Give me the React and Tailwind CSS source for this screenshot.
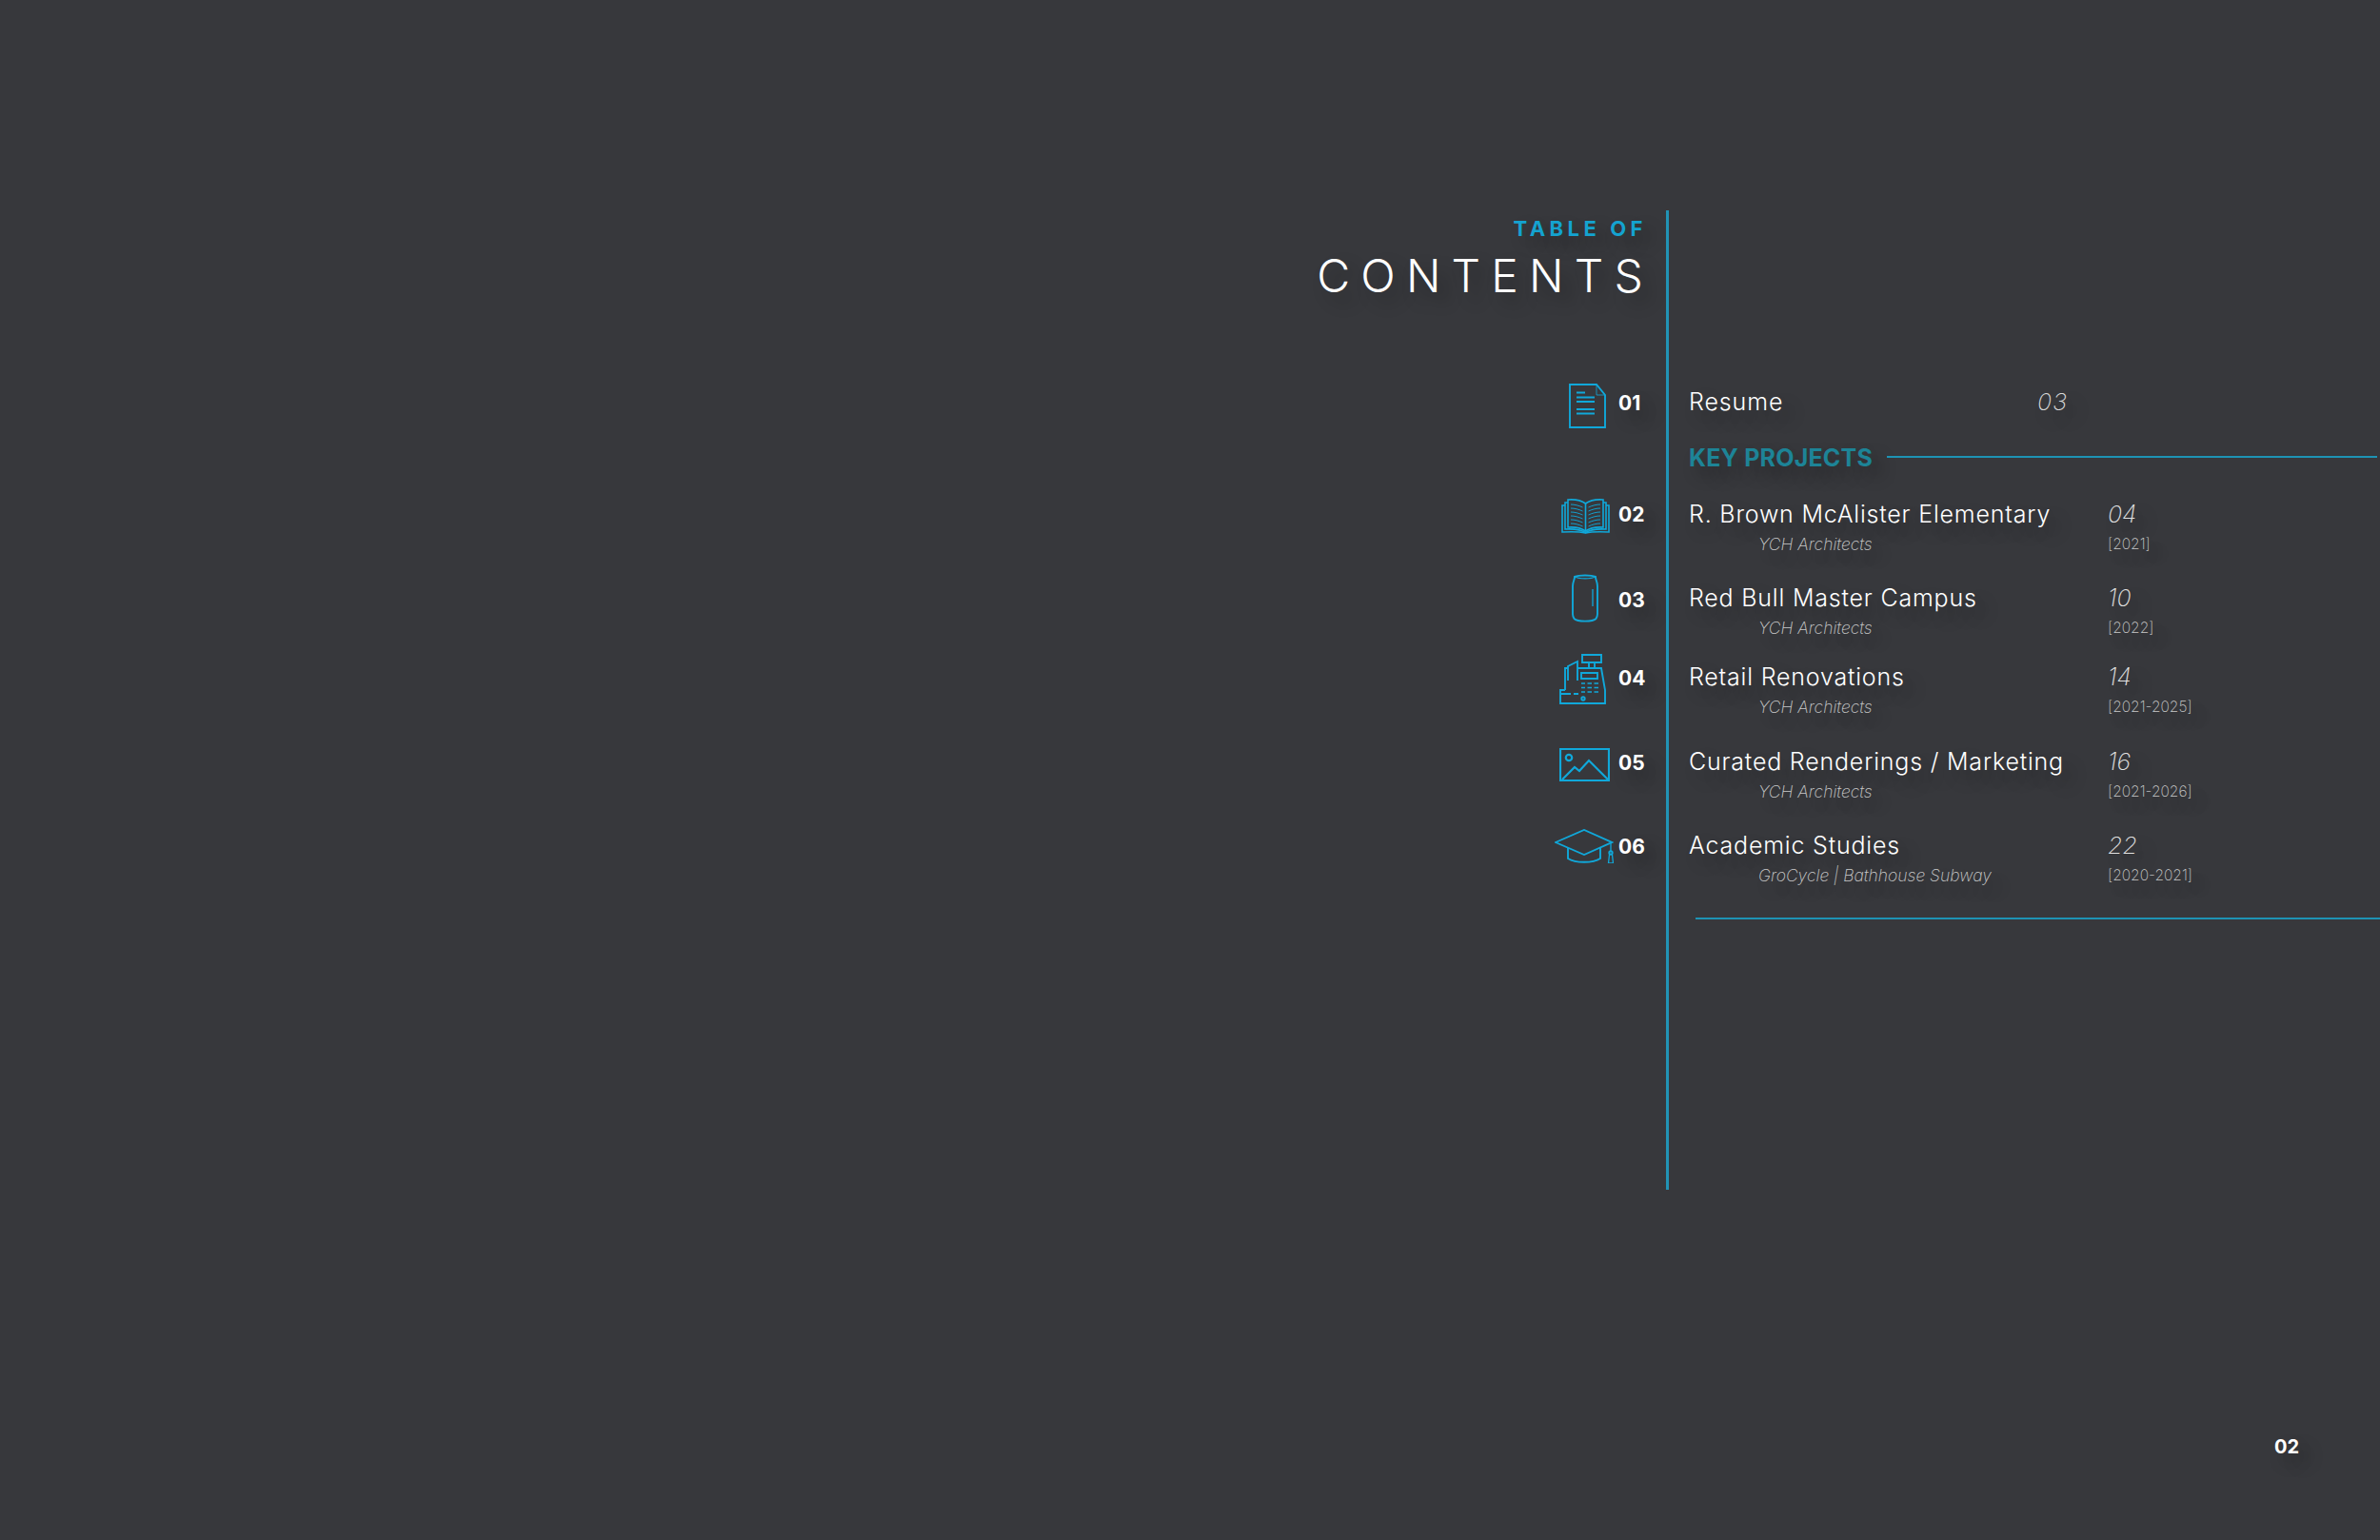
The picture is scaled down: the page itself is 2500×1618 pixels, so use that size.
const sh = "[text-shadow:10px_10px_18px_rgba(0,0,0,0.32)]";

const blue = "#10a8da";

const DocIcon = () => (
  <svg width="39" height="47" viewBox="0 0 39 47" fill="none" stroke={blue} strokeWidth="1.9" className="mr-[13px] mt-[4px] shrink-0">
    <path d="M1 1H29L38 12V46H1Z" />
    <path d="M29 1V12H38" strokeWidth="0.8" />
    <path d="M8 9.5H17M8 14.5H27M8 19H27M8 27H27M8 31.5H27" strokeWidth="2" />
  </svg>
);

const BookIcon = () => (
  <svg width="51" height="37" viewBox="0 0 51 37" fill="none" stroke={blue} strokeWidth="1.6" className="mr-[9px] mt-[2px] shrink-0">
    <path d="M25.5 5C20 1 13 .5 7 1V30C14 29.5 20 30 25.5 34C31 30 37 29.5 44 30V1C38 .5 31 1 25.5 5Z" />
    <path d="M25.5 5V34" />
    <path d="M7 4H4V32C12 31.5 20 32 25.5 35.5C31 32 39 31.5 47 32V4H44" />
    <path d="M4 7H1V35C10 34.5 19 34.5 25.5 36C32 34.5 41 34.5 50 35V7H47" />
    <path d="M10 6C14 6 18 7 22.5 9M10 10C14 10 18 11 22.5 13M10 14C14 14 18 15 22.5 17M10 18C14 18 18 19 22.5 21M10 22C14 22 18 23 22.5 25M10 26C14 26 18 27 22.5 29" strokeWidth="0.9" />
    <path d="M41 6C37 6 33 7 28.5 9M41 10C37 10 33 11 28.5 13M41 14C37 14 33 15 28.5 17M41 18C37 18 33 19 28.5 21M41 22C37 22 33 23 28.5 25M41 26C37 26 33 27 28.5 29" strokeWidth="0.9" />
  </svg>
);

const CanIcon = () => (
  <svg width="28" height="52" viewBox="0 0 28 52" fill="none" stroke={blue} strokeWidth="1.9" className="mr-[21px] mt-[-5px] shrink-0">
    <path d="M3 3C8 1 20 1 25 3C25 5 25.5 6 26 7.5C26.7 9.5 27 11 27 13V42C27 44 26.5 45.5 25.5 47C22 50.5 6 50.5 2.5 47C1.5 45.5 1 44 1 42V13C1 11 1.3 9.5 2 7.5C2.5 6 3 5 3 3Z" />
    <path d="M3 3C8 5.5 20 5.5 25 3" strokeWidth="1.3" />
    <path d="M22 16V34" strokeWidth="1.3" />
  </svg>
);

const RegisterIcon = () => (
  <svg width="50" height="54" viewBox="0 0 50 54" fill="none" stroke={blue} strokeWidth="1.9" className="mr-[12px] mt-[1px] shrink-0">
    <path d="M24 1H44V9H24Z" />
    <path d="M31 9V15M37 9V15" />
    <path d="M6 38V15H9" />
    <path d="M9 28V13L19 8V28" />
    <path d="M19 15H44L48 38V52H1V38L6 38" />
    <path d="M23 20H40V26H23Z" />
    <path d="M23 31H27M29.5 31H34M36.5 31H41M23 35.5H27M29.5 35.5H34M36.5 35.5H41M23 40H27M29.5 40H34M36.5 40H41" strokeWidth="1.5" />
    <path d="M2 42H12M15 42H20" />
    <circle cx="25" cy="47" r="1.7" />
  </svg>
);

const ImageIcon = () => (
  <svg width="53" height="35" viewBox="0 0 53 35" fill="none" stroke={blue} strokeWidth="2.2" className="mr-[9px] mt-[3px] shrink-0">
    <path d="M1 1H52V34H1Z" />
    <circle cx="10" cy="10" r="3.2" />
    <path d="M3 33L16 20L21 24L31 13L51 33" />
  </svg>
);

const CapIcon = () => (
  <svg width="62" height="36" viewBox="0 0 62 36" fill="none" stroke={blue} strokeWidth="1.9" className="mr-[5px] mt-[-3px] shrink-0">
    <path d="M1 14L31 1L60 14L31 27Z" />
    <path d="M14 20V31C22 36 40 36 48 31V20" />
    <path d="M59 14V24" strokeWidth="1.3" />
    <circle cx="59" cy="25" r="1.7" />
    <path d="M57.5 27L56.5 36H61.5L60.5 27" strokeWidth="1.3" />
  </svg>
);

const left = [
  { n: "01", Icon: DocIcon, c: "mt-[100px]" },
  { n: "02", Icon: BookIcon, c: "mt-[85px]" },
  { n: "03", Icon: CanIcon, c: "mt-[58px]" },
  { n: "04", Icon: RegisterIcon, c: "mt-[50px]" },
  { n: "05", Icon: ImageIcon, c: "mt-[57px]" },
  { n: "06", Icon: CapIcon, c: "mt-[56px]" },
];

const projects = [
  { t: "R. Brown McAlister Elementary", s: "YCH Architects", p: "04", y: "[2021]", c: "mt-[27px]" },
  { t: "Red Bull Master Campus", s: "YCH Architects", p: "10", y: "[2022]", c: "mt-[30px]" },
  { t: "Retail Renovations", s: "YCH Architects", p: "14", y: "[2021-2025]", c: "mt-[25px]" },
  { t: "Curated Renderings / Marketing", s: "YCH Architects", p: "16", y: "[2021-2026]", c: "mt-[31px]" },
  { t: "Academic Studies", s: "GroCycle | Bathhouse Subway", p: "22", y: "[2020-2021]", c: "mt-[30px]" },
];

export default function App() {
  return (
    <div className="w-[2500px] h-[1618px] overflow-hidden bg-[#37383c] text-white font-['Inter','Liberation_Sans',sans-serif]">
      <div className="flex h-[1250px] pt-[221px]">
        <div className="w-[1750px] shrink-0 pr-[22px] flex flex-col items-end">
          <div className={`h-[16px] mt-[11px] mr-[-2px] flex items-center text-[22px] leading-none font-bold tracking-[4.5px] text-[#14a3d0] whitespace-nowrap ${sh}`}>
            TABLE OF
          </div>
          <div className={`h-[36px] mt-[24px] mr-[-9px] flex items-center text-[48px] leading-none font-light tracking-[11.2px] whitespace-nowrap ${sh}`}>
            CONTENTS
          </div>
          {left.map(({ n, Icon, c }) => (
            <div key={n} className={`flex items-center justify-end h-[32px] ${c}`}>
              <Icon />
              <span className={`w-[28px] text-[21px] font-bold whitespace-nowrap ${sh}`}>{n}</span>
            </div>
          ))}
        </div>

        <div className="flex-1 min-w-0 border-l-[3px] border-[#2193b5]">
          <div className="pl-[21px] pt-[186px]">
            <div className={`flex h-[32px] items-center text-[25px] font-light tracking-[0.9px] whitespace-nowrap ${sh}`}>
              <span className="w-[366px]">Resume</span>
              <span className="italic font-extralight text-[#d8d8d8]">03</span>
            </div>
            <div className="flex h-[32px] items-center mt-[26px]">
              <span className={`pt-[2px] text-[25px] font-bold tracking-[0.2px] text-[#1d8497] whitespace-nowrap ${sh}`}>KEY PROJECTS</span>
              <span className="ml-[15px] w-[515px] h-[2px] bg-[#1d93b4] -mt-[2px]" />
            </div>
            {projects.map((r) => (
              <div key={r.t} className={`grid grid-cols-[440px_1fr] ${r.c}`}>
                <div className={`h-[32px] pt-[2px] flex items-center text-[25px] font-light tracking-[0.8px] whitespace-nowrap ${sh}`}>{r.t}</div>
                <div className={`h-[32px] pt-[2px] flex items-center text-[25px] italic font-extralight text-[#e2e2e2] ${sh}`}>{r.p}</div>
                <div className={`h-[20px] mt-[6px] pl-[73px] flex items-center text-[17.5px] italic font-extralight text-[#c9c9c9] whitespace-nowrap ${sh}`}>{r.s}</div>
                <div className={`h-[20px] mt-[6px] flex items-center text-[15.5px] font-extralight text-[#c9c9c9] whitespace-nowrap ${sh}`}>{r.y}</div>
              </div>
            ))}
            <div className="h-[2px] mt-[34px] ml-[7px] bg-[#1d93b4]" />
          </div>
        </div>
      </div>
      <div className={`mt-[254px] h-[32px] pr-[85px] flex items-center justify-end text-[20px] font-bold ${sh}`}>02</div>
    </div>
  );
}
